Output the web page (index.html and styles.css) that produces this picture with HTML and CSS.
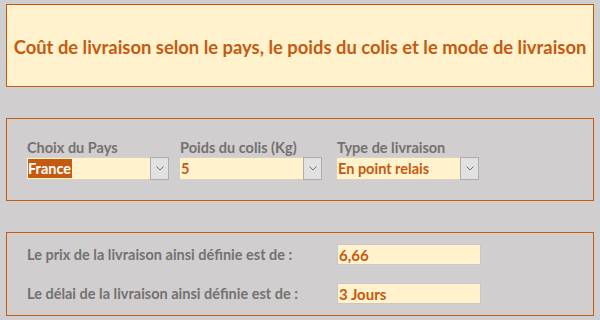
FILE: index.html
```html
<!DOCTYPE html>
<html lang="fr">
<head>
    <meta charset="UTF-8">
    <title>Coût de livraison</title>
    <link rel="stylesheet" href="styles.css">
</head>
<body>
    <div class="sheet">
        <div class="title-box">
            <h1>Coût de livraison selon le pays, le poids du colis et le mode de livraison</h1>
        </div>

        <div class="choice-box">
            <div class="choice">
                <span class="label">Choix du Pays</span>
                <div class="combo">
                    <div class="combo-value"><span class="selected">France</span></div>
                    <div class="combo-btn"><svg width="8" height="5" viewBox="0 0 8 5"><path d="M0.5 0.5 L4 4 L7.5 0.5" fill="none" stroke="#707070" stroke-width="1"/></svg></div>
                </div>
            </div>
            <div class="choice">
                <span class="label">Poids du colis (Kg)</span>
                <div class="combo">
                    <div class="combo-value">5</div>
                    <div class="combo-btn"><svg width="8" height="5" viewBox="0 0 8 5"><path d="M0.5 0.5 L4 4 L7.5 0.5" fill="none" stroke="#707070" stroke-width="1"/></svg></div>
                </div>
            </div>
            <div class="choice">
                <span class="label">Type de livraison</span>
                <div class="combo">
                    <div class="combo-value">En point relais</div>
                    <div class="combo-btn"><svg width="8" height="5" viewBox="0 0 8 5"><path d="M0.5 0.5 L4 4 L7.5 0.5" fill="none" stroke="#707070" stroke-width="1"/></svg></div>
                </div>
            </div>
        </div>

        <div class="result-box">
            <div class="result-row">
                <span class="label">Le prix de la livraison ainsi définie est de :</span>
                <div class="result-value">6,66</div>
            </div>
            <div class="result-row">
                <span class="label">Le délai de la livraison ainsi définie est de :</span>
                <div class="result-value">3 Jours</div>
            </div>
        </div>
    </div>
</body>
</html>
```

FILE: styles.css
```css
body {
    margin: 0;
    background: #d0cece;
    font-family: Lato, "Open Sans", sans-serif;
    font-weight: bold;
}
.sheet {
    padding: 4px 6px 0 6px;
    width: 588px;
}
.title-box {
    height: 81px;
    background: #fff2cc;
    border: 1px solid #c55a11;
    display: flex;
    align-items: center;
    justify-content: center;
    padding-top: 2px;
    box-sizing: border-box;
    height: 83px;
}
h1 {
    margin: 0;
    font-size: 18.4px;
    color: #c55a11;
    white-space: nowrap;
}
.choice-box {
    margin-top: 31px;
    border: 1px solid #c55a11;
    display: grid;
    grid-template-columns: 153px 157px 142px;
    align-content: start;
    padding-left: 20px;
    padding-top: 19px;
    height: 62px;
}
.choice {
    display: flex;
    flex-direction: column;
}
.label {
    color: #767171;
    font-size: 14.5px;
    line-height: 19px;
}
.combo {
    display: flex;
    width: 142px;
    height: 23px;
}
.combo-value {
    flex: 1;
    background: #fff2cc;
    border-top: 1px solid #d9d2bd;
    border-bottom: 1px solid #d9d2bd;
    color: #c55a11;
    font-size: 14.5px;
    line-height: 21px;
    padding-left: 1px;
}
.selected {
    background: #c55a11;
    color: #fff;
    padding: 1px 1px 1px 0;
}
.combo-btn {
    width: 17px;
    background: #e1e1e1;
    border: 1px solid #adadad;
    display: flex;
    align-items: center;
    justify-content: center;
}
.result-box {
    margin-top: 31px;
    border: 1px solid #c55a11;
    height: 58px;
    padding: 11px 0 13px 20px;
    display: flex;
    flex-direction: column;
    gap: 18px;
}
.result-row {
    display: flex;
    align-items: center;
}
.result-row .label {
    width: 310px;
}
.result-value {
    width: 141px;
    height: 19px;
    background: #fff2cc;
    border: 1px solid #c8c8c8;
    color: #c55a11;
    font-size: 15px;
    line-height: 20px;
    padding-left: 1px;
    box-sizing: content-box;
}
```
